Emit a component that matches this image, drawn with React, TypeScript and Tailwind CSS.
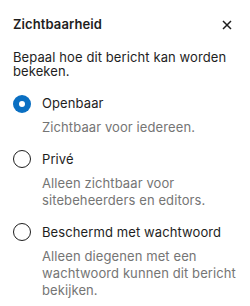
import React from "react";

function Radio({ checked }: { checked: boolean }) {
  return checked ? (
    <span className="flex h-[18px] w-[18px] shrink-0 items-center justify-center rounded-full bg-[#0a6fc2]">
      <span className="h-[6px] w-[6px] rounded-full bg-white" />
    </span>
  ) : (
    <span className="block h-[18px] w-[18px] shrink-0 rounded-full border-[1.5px] border-[#1e1e1e] bg-white" />
  );
}

function Option({
  label,
  help,
  checked,
  helpGap,
}: {
  label: string;
  help: string[];
  checked: boolean;
  helpGap: string;
}) {
  return (
    <div className="flex flex-col">
      <div className="flex h-[17px] items-center gap-[11px]">
        <Radio checked={checked} />
        <span className="text-[13px] leading-[17px] tracking-[0.1px] text-[#1e1e1e]">{label}</span>
      </div>
      <div className={`${helpGap} pl-[29px] text-[13px] leading-[17px] tracking-[0.1px] text-[#757575]`}>
        {help.map((h) => (
          <div key={h}>{h}</div>
        ))}
      </div>
    </div>
  );
}

export default function App() {
  return (
    <div
      className="h-[306px] w-[250px] bg-white"
      style={{ fontFamily: "Inter, 'Noto Sans', sans-serif" }}
    >
      <div className="flex h-[49px] items-center justify-between pl-[13px] pr-[18px]">
        <span className="text-[13px] font-semibold tracking-[0.1px] text-[#1e1e1e]">Zichtbaarheid</span>
        <svg width="10" height="10" viewBox="0 0 10 10" fill="none">
          <path d="M1 1L9 9M9 1L1 9" stroke="#1e1e1e" strokeWidth="1.5" />
        </svg>
      </div>
      <div className="px-[13px]">
        <p className="mt-[2px] text-[13px] leading-[13.5px] tracking-[0.1px] text-[#1e1e1e]">
          Bepaal hoe dit bericht kan worden
          <br />
          bekeken.
        </p>
        <div className="mt-[17px] flex flex-col gap-[15px]">
          <Option checked helpGap="mt-[6.5px]" label="Openbaar" help={["Zichtbaar voor iedereen."]} />
          <Option
            checked={false}
            helpGap="mt-[7px]"
            label="Privé"
            help={["Alleen zichtbaar voor", "sitebeheerders en editors."]}
          />
          <Option
            checked={false}
            helpGap="mt-[7px]"
            label="Beschermd met wachtwoord"
            help={["Alleen diegenen met een", "wachtwoord kunnen dit bericht", "bekijken."]}
          />
        </div>
      </div>
    </div>
  );
}
